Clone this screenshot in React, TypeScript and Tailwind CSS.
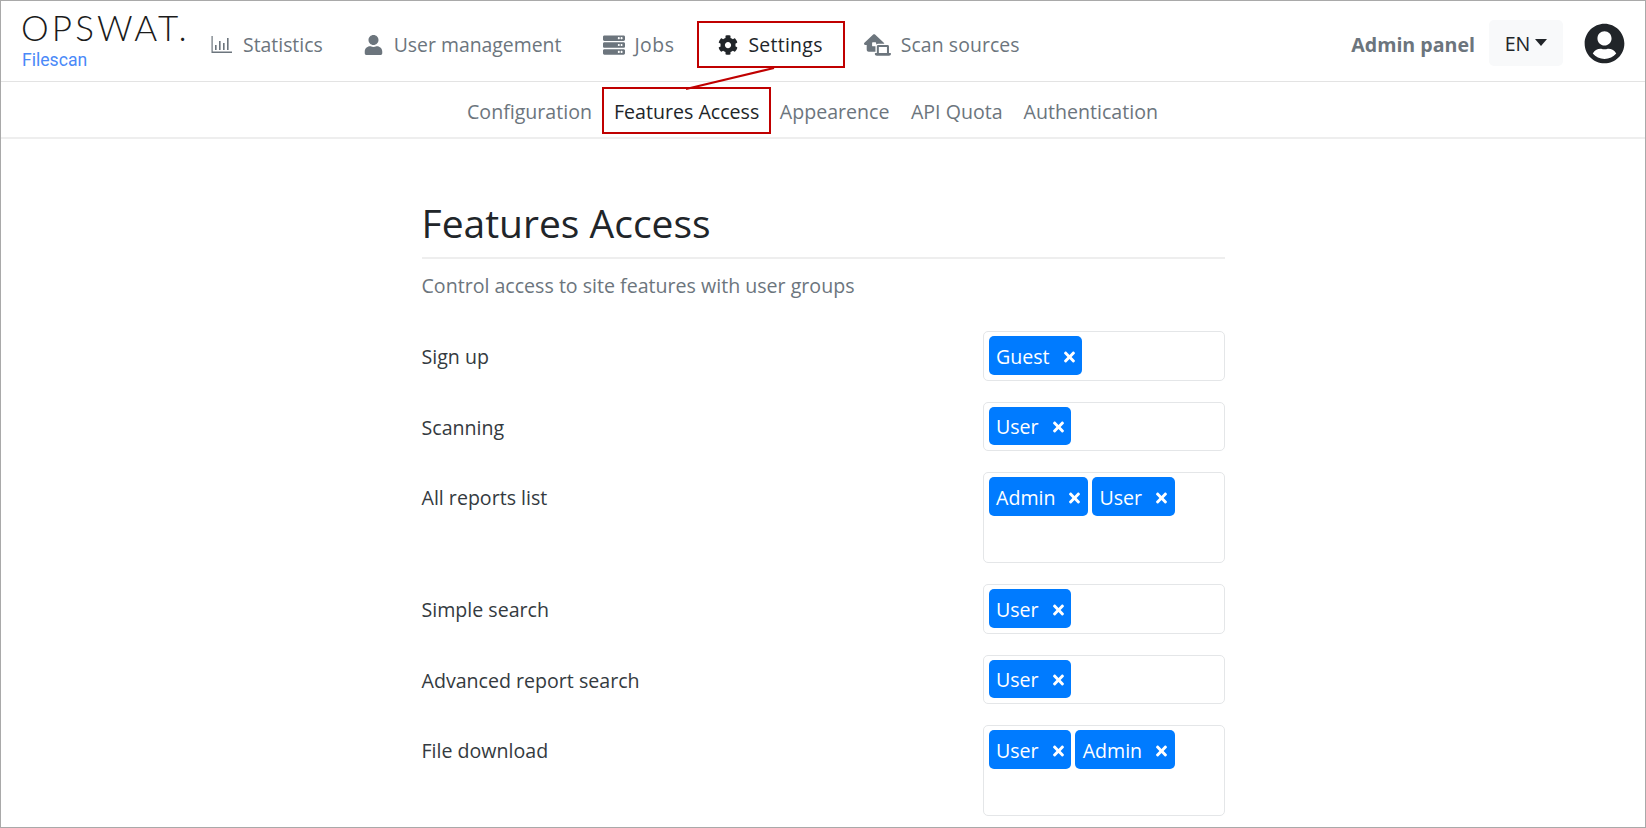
import React from 'react';
import { FaUser, FaServer, FaCog, FaUserCircle, FaTimes } from 'react-icons/fa';
import { FaHouseLaptop } from 'react-icons/fa6';

const font = { fontFamily: '"Open Sans", "Noto Sans", sans-serif' };

// thin bar chart, the one in the icon packages is too heavy
const StatsIcon = () => (
  <svg viewBox="0 0 21 17" className="w-[21px] h-[17px]" fill="currentColor">
    <path d="M0.5 0h1.2v15.6H21V17H0.5z" />
    <rect x="4" y="9" width="1.6" height="5" />
    <rect x="8" y="5" width="1.6" height="9" />
    <rect x="12" y="7" width="1.6" height="7" />
    <rect x="16" y="2" width="1.6" height="12" />
  </svg>
);

const rows = [
  { label: 'Sign up', tags: ['Guest'], tall: false },
  { label: 'Scanning', tags: ['User'], tall: false },
  { label: 'All reports list', tags: ['Admin', 'User'], tall: true },
  { label: 'Simple search', tags: ['User'], tall: false },
  { label: 'Advanced report search', tags: ['User'], tall: false },
  { label: 'File download', tags: ['User', 'Admin'], tall: true },
];

const Tag = ({ name }: { name: string }) => (
  <span className="flex items-center h-[38.5px] pl-[7.5px] pr-[5.5px] pt-[3px] rounded-[5px] bg-[#007bff] text-white">
    {name}
    <FaTimes className="ml-[12px] w-[15px] h-[16px]" />
  </span>
);

const App = () => {
  return (
    <div
      className="relative w-[1646px] h-[828px] overflow-hidden bg-white border border-[#a9a9a9] text-[19.6px] leading-[28px] text-[#6c757d]"
      style={font}
    >
      <nav className="flex items-start h-[80px] text-[19.4px] border-b border-[#e3e3e3] box-content">
        <div className="w-[189px] pl-[20px] shrink-0">
          <div className="mt-[5px] text-[35px] leading-[42px] text-[#1b1b1b] tracking-[3.1px] whitespace-nowrap" style={{ fontFamily: 'Lato, sans-serif', fontWeight: 300 }}>
            OPSWAT.
          </div>
          <div className="mt-[2px] ml-[1px] text-[17.6px] leading-[20px] text-[#4a89f8]" style={{ fontFamily: 'Roboto, sans-serif' }}>
            Filescan
          </div>
        </div>
        <div className="flex items-center h-[47px] mt-[20px]">
          <a className="flex items-center pl-[21px] pr-[20px]"><StatsIcon /><span className="ml-[11px]">Statistics</span></a>
          <a className="flex items-center pl-[21px] pr-[23px]"><FaUser className="w-[19px] h-[20px]" /><span className="ml-[11px]">User management</span></a>
          <a className="flex items-center pl-[19px] pr-[23px]"><FaServer className="w-[22px] h-[22px]" /><span className="ml-[9px] tracking-[0.5px]">Jobs</span></a>
          <a className="flex items-center h-[47px] pl-[19px] pr-[20px] border-2 border-[#c00000] text-[#212529]"><FaCog className="w-[20px] h-[20px]" /><span className="ml-[10px] tracking-[0.3px]">Settings</span></a>
          <a className="flex items-center pl-[19px] pr-[21px]"><FaHouseLaptop className="w-[27px] h-[22px]" /><span className="ml-[10px] tracking-[0.1px]">Scan sources</span></a>
        </div>
        <div className="ml-auto flex items-center pr-[20px] mt-[19px] text-[19.6px]">
          <span className="font-bold mr-[14px] pt-[3px]">Admin panel</span>
          <div className="flex items-center justify-center w-[74px] h-[46px] pt-[1px] rounded-[5px] bg-[#f8f9fa] text-[#212529]">
            EN
            <span className="ml-[5px] mb-[3px] border-x-[6.5px] border-x-transparent border-t-[7px] border-t-[#212529]" />
          </div>
          <FaUserCircle className="ml-[21px] w-[41px] h-[41px] text-[#212529]" />
        </div>
      </nav>

      <div className="flex justify-center items-center h-[57px] pt-[2px] border-b-2 border-[#eeeeee] pr-[21px]">
        <a className="px-[10.5px] pt-[2px]">Configuration</a>
        <a className="flex items-center h-[47px] pt-[2px] px-[9.5px] border-2 border-[#c00000] text-[#212529]">Features Access</a>
        <a className="pl-[9px] pr-[11px] pt-[2px]">Appearence</a>
        <a className="px-[10.5px] pt-[2px]">API Quota</a>
        <a className="px-[10.5px] pt-[2px]">Authentication</a>
      </div>

      <main className="w-[803px] mx-auto">
        <h1 className="mt-[60px] pb-[11px] text-[39px] leading-[47px] text-[#212529] border-b-2 border-[#eeeeee]">Features Access</h1>
        <p className="mt-[13px] mb-[31px]">Control access to site features with user groups</p>
        {rows.map(row => (
          <div key={row.label} className="flex justify-between mb-[21px]">
            <label className="pt-[12px] text-[#343a40]">{row.label}</label>
            <div className={`flex items-start gap-[4px] w-[242px] pl-[5px] pr-[4px] py-[4px] rounded-[5px] border border-[#e4e6e8] ${row.tall ? 'h-[91px]' : 'h-[49.5px]'}`}>
              {row.tags.map(t => <Tag key={t} name={t} />)}
            </div>
          </div>
        ))}
      </main>

      <svg className="absolute left-0 top-0 w-[1646px] h-[140px] pointer-events-none">
        <line x1="773" y1="67" x2="685" y2="88" stroke="#c00000" strokeWidth="2" />
      </svg>
    </div>
  );
};

export default App;
